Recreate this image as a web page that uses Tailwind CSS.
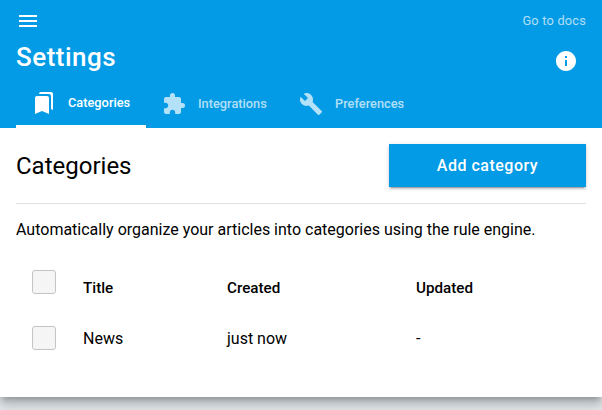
<!DOCTYPE html>
<html lang="en">
<head>
<meta charset="utf-8">
<title>Settings</title>
<script src="https://cdn.jsdelivr.net/npm/@tailwindcss/browser@4"></script>
</head>
<body class="h-[410px] overflow-hidden bg-[#e6ebef] font-['Roboto',sans-serif] text-black">
<main class="h-[397px] bg-white shadow-[0_5px_5px_-3px_rgba(0,0,0,0.2),0_8px_10px_1px_rgba(0,0,0,0.14),0_3px_14px_2px_rgba(0,0,0,0.12)]">
  <header class="flex h-32 flex-col bg-[#039be5] px-4 text-white">
    <div class="flex h-[41px] items-center justify-between pt-px">
      <svg class="size-6" viewBox="0 0 24 24" fill="currentColor"><path d="M3 18h18v-2H3v2zm0-5h18v-2H3v2zm0-7v2h18V6H3z"/></svg>
      <a class="text-[12.8px] tracking-[0.2px] text-white/70">Go to docs</a>
    </div>
    <div class="flex h-[39px] items-center justify-between">
      <h1 class="-mt-1.5 text-[26px] font-medium tracking-[0.5px]">Settings</h1>
      <svg class="mr-2 size-6" viewBox="0 0 24 24" fill="currentColor"><path d="M12 2C6.480 2 2 6.480 2 12s4.480 10 10 10 10-4.480 10-10S17.520 2 12 2zm1 15h-2v-6h2v6zm0-8h-2V7h2v2z"/></svg>
    </div>
    <nav class="flex h-12 text-[12.8px] font-medium">
      <a class="flex w-[130px] items-center border-b-[3px] border-white pl-4"><svg class="mr-3 size-6" viewBox="0 0 24 24" fill="currentColor"><path d="M19 18l2 1V3c0-1.100-.9-2-2-2H8.990C7.890 1 7 1.900 7 3h10c1.100 0 2 .9 2 2v13zM15 5H5c-1.100 0-2 .9-2 2v16l7-3 7 3V7c0-1.100-.9-2-2-2z"/></svg>Categories</a>
      <a class="flex w-[137px] items-center pl-4 text-white/70"><svg class="mr-3 size-6" viewBox="0 0 24 24" fill="currentColor"><path d="M20.500 11H19V7c0-1.100-.9-2-2-2h-4V3.500a2.500 2.500 0 0 0-5 0V5H4c-1.100 0-1.990.9-1.990 2v3.800H3.500c1.490 0 2.700 1.210 2.700 2.700s-1.210 2.700-2.700 2.700H2V20c0 1.100.9 2 2 2h3.800v-1.500c0-1.490 1.210-2.700 2.700-2.700s2.700 1.210 2.700 2.700V22H17c1.100 0 2-.9 2-2v-4h1.500a2.500 2.500 0 0 0 0-5z"/></svg>Integrations</a>
      <a class="flex items-center pl-4 text-white/70"><svg class="mr-3 size-6" viewBox="0 0 24 24" fill="currentColor"><path d="M22.700 19l-9.100-9.100c.9-2.300.4-5-1.500-6.900-2-2-5-2.400-7.400-1.300L9 6 6 9 1.600 4.700C.4 7.100.9 10.100 2.900 12.100c1.900 1.900 4.600 2.400 6.900 1.500l9.100 9.100c.4.4 1 .4 1.400 0l2.300-2.300c.5-.4.5-1.100.1-1.400z"/></svg>Preferences</a>
    </nav>
  </header>
  <section class="px-4 pt-4">
    <div class="flex h-[60px] items-start justify-between border-b border-[#e0e0e0]">
      <h2 class="pt-1 text-2xl leading-9">Categories</h2>
      <button class="h-[43px] w-[197px] bg-[#039be5] font-medium tracking-[0.5px] text-white shadow-[0_3px_1px_-2px_rgba(0,0,0,0.2),0_2px_2px_0_rgba(0,0,0,0.14),0_1px_5px_0_rgba(0,0,0,0.12)]">Add category</button>
    </div>
    <p class="pt-[14px] leading-6">Automatically organize your articles into categories using the rule engine.</p>
    <div class="mt-[15px] grid grid-cols-[67px_144px_189px_1fr] text-base">
      <div class="h-14 pt-[13px] pl-4"><div class="size-6 rounded-[3px] border border-[#c4c4c4] bg-[#f5f5f5]"></div></div>
      <div class="pt-5 text-[15.2px] leading-[22px] font-medium">Title</div><div class="pt-5 text-[15.2px] leading-[22px] font-medium">Created</div><div class="pt-5 text-[15.2px] leading-[22px] font-medium">Updated</div>
      <div class="h-14 pt-[13px] pl-4"><div class="size-6 rounded-[3px] border border-[#c4c4c4] bg-[#f5f5f5]"></div></div>
      <div class="pt-[14px]">News</div><div class="pt-[14px]">just now</div><div class="pt-[14px]">-</div>
    </div>
  </section>
</main>
</body>
</html>
